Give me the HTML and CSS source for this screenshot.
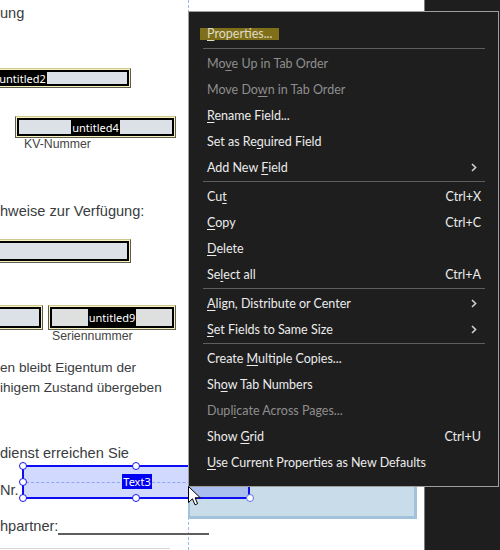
FILE: index.html
```html
<!DOCTYPE html>
<html lang="de">
<head>
<meta charset="utf-8">
<title>Form editor context menu</title>
<link rel="stylesheet" href="styles.css">
</head>
<body>
<div class="screen">
  <div class="page">
    <div class="guide"></div>

    <div class="txt t-ung">ung</div>

    <div class="fld f2"><div class="fin"><span class="lbl">untitled2</span></div></div>

    <div class="fld f4"><div class="fin"><span class="lbl">untitled4</span></div></div>
    <div class="txt cap t-kv">KV-Nummer</div>

    <div class="txt t-hw">hweise zur Verfügung:</div>

    <div class="fld fw"><div class="fin"></div></div>

    <div class="txt cap t-sn">Seriennummer</div>
    <div class="fld fl"><div class="fin"></div></div>
    <div class="fld f9"><div class="fin grey"><span class="lbl">untitled9</span></div></div>

    <div class="txt para t-p1">en bleibt Eigentum der</div>
    <div class="txt para t-p2">ihigem Zustand übergeben</div>

    <div class="txt t-ds">dienst erreichen Sie</div>
    <div class="txt t-nr">Nr.</div>

    <div class="bluefield"></div>

    <div class="sel">
      <div class="midline"></div>
      <span class="sel-lbl">Text3</span>
      <i class="hd h1"></i><i class="hd h2"></i><i class="hd h3"></i>
      <i class="hd h4"></i><i class="hd h5"></i><i class="hd h6 faint"></i>
    </div>

    <div class="txt t-hp">hpartner:</div>
    <div class="uline"></div>
    <div class="foot"></div>
  </div>
  <div class="gutter"></div>

  <div class="menu">
    <div class="item"><span class="hl"><u>P</u>roperties...</span></div>
    <div class="sep"></div>
    <div class="item dis"><span>Mo<u>v</u>e Up in Tab Order</span></div>
    <div class="item dis"><span>Move Do<u>w</u>n in Tab Order</span></div>
    <div class="item"><span><u>R</u>ename Field...</span></div>
    <div class="item"><span>Set as Re<u>q</u>uired Field</span></div>
    <div class="item"><span>Add New <u>F</u>ield</span><svg class="chev" width="6" height="9" viewBox="0 0 6 9"><path d="M1 1 L4.6 4.5 L1 8" fill="none" stroke="#cfcfcf" stroke-width="1.6"/></svg></div>
    <div class="sep"></div>
    <div class="item"><span>Cu<u>t</u></span><span class="key">Ctrl+X</span></div>
    <div class="item"><span><u>C</u>opy</span><span class="key">Ctrl+C</span></div>
    <div class="item"><span><u>D</u>elete</span></div>
    <div class="item"><span>Se<u>l</u>ect all</span><span class="key">Ctrl+A</span></div>
    <div class="sep"></div>
    <div class="item"><span><u>A</u>lign, Distribute or Center</span><svg class="chev" width="6" height="9" viewBox="0 0 6 9"><path d="M1 1 L4.6 4.5 L1 8" fill="none" stroke="#cfcfcf" stroke-width="1.6"/></svg></div>
    <div class="item"><span><u>S</u>et Fields to Same Size</span><svg class="chev" width="6" height="9" viewBox="0 0 6 9"><path d="M1 1 L4.6 4.5 L1 8" fill="none" stroke="#cfcfcf" stroke-width="1.6"/></svg></div>
    <div class="sep"></div>
    <div class="item"><span>Create <u>M</u>ultiple Copies...</span></div>
    <div class="item"><span>Sh<u>o</u>w Tab Numbers</span></div>
    <div class="item dis"><span>Dupl<u>i</u>cate Across Pages...</span></div>
    <div class="item"><span>Show <u>G</u>rid</span><span class="key">Ctrl+U</span></div>
    <div class="item"><span><u>U</u>se Current Properties as New Defaults</span></div>
  </div>

  <svg class="cursor" width="14" height="21" viewBox="0 0 14 21"><path d="M0.5 0.5 L0.5 16.5 L4.4 12.8 L7 18.8 L9.6 17.7 L7.1 11.8 L12.3 11.8 Z" fill="#fff" stroke="#000" stroke-width="1"/></svg>
</div>
</body>
</html>
```
FILE: styles.css
```css
* { box-sizing: border-box; }
html, body { margin: 0; padding: 0; background: #fff; }
.screen {
  position: relative;
  display: flex;
  width: 500px;
  height: 550px;
  overflow: hidden;
}
.page {
  position: relative;
  width: 425px;
  height: 550px;
  background: #fff;
  border-right: 1px solid #7c7c7c;
  overflow: hidden;
  font-family: "Liberation Sans", Arial, sans-serif;
  color: #3a3c40;
}
.gutter { flex: 1; background: #1e1e1e; }

.guide {
  position: absolute;
  left: 188px; top: 0;
  height: 550px; width: 0;
  border-left: 1px dashed #9fb4ea;
}

.txt { position: absolute; white-space: nowrap; font-size: 14.6px; line-height: 18px; }
.cap { font-size: 12.3px; line-height: 14px; color: #444; }
.para { font-size: 13.6px; line-height: 16px; }
.t-ung { left: 0; top: 4px; }
.t-kv { left: 24px; top: 137px; }
.t-hw { left: 0; top: 202px; }
.t-sn { left: 52px; top: 329px; }
.t-p1 { left: 0; top: 360px; }
.t-p2 { left: 0; top: 380px; }
.t-ds { left: 0; top: 444px; }
.t-nr { left: 0; top: 481px; }
.t-hp { left: 0; top: 517px; }
.uline { position: absolute; left: 58px; top: 533px; width: 151px; height: 2px; background: #5e5e5e; }
.foot { position: absolute; left: 0; top: 548px; width: 170px; height: 1px; background: #d8d8d8; }

/* form fields */
.fld {
  position: absolute;
  display: flex;
  border: 1px solid #5c5c50;
  border-top-color: #cfc990;
  background: #f6f1bd;
  padding: 1px;
}
.fin {
  flex: 1;
  display: flex;
  justify-content: center;
  border: 2px solid #000;
  background: #dce1e8;
}
.fin.grey { background: #dde0de; }
.lbl {
  display: flex;
  align-items: center;
  background: #000;
  color: #fff;
  font-family: "Noto Sans", sans-serif;
  font-size: 11px;
  padding: 0 1px;
}
.f2 { left: -86px; top: 68px; width: 217px; height: 20px; }
.f4 { left: 15px; top: 116px; width: 161px; height: 22px; }
.fw { left: -20px; top: 239px; width: 151px; height: 24px; }
.fl { left: -20px; top: 305px; width: 63px; height: 25px; }
.f9 { left: 48px; top: 305px; width: 128px; height: 25px; }

/* light blue field under the menu */
.bluefield {
  position: absolute;
  left: 188px; top: 468px;
  width: 229px; height: 51px;
  background: #c9dce9;
  border: 3px solid #a2c2dc;
  border-left-width: 2px;
}

/* selected field Text3 */
.sel {
  position: absolute;
  left: 22px; top: 465px;
  width: 228px; height: 34px;
  border: 2px solid #0d0df2;
  background: rgba(80, 110, 250, 0.26);
  display: flex;
  align-items: center;
  justify-content: center;
}
.midline {
  position: absolute;
  left: 2px; right: 2px; top: 15px;
  border-top: 1px dashed #90a4f2;
}
.sel-lbl {
  position: relative;
  background: #0000f5;
  color: #fff;
  font-family: "Noto Sans", sans-serif;
  font-size: 11px;
  line-height: 15px;
  padding: 0 1px;
  margin-left: 2px;
  margin-top: -1px;
}
.hd {
  position: absolute;
  width: 8px; height: 8px;
  border-radius: 50%;
  background: #fff;
  border: 1px solid #1515f0;
}
.h1 { left: -5px; top: -5px; }
.h2 { left: 108px; top: -5px; }
.h3 { left: -5px; top: 11px; }
.h4 { left: -5px; top: 27px; }
.h5 { left: 108px; top: 27px; }
.h6 { left: 222px; top: 27px; }
.faint { border-color: #6272e6; }

/* context menu */
.menu {
  position: absolute;
  left: 188px; top: 11px;
  width: 311px; height: 476px;
  background: #1e1e1e;
  border: 1px solid #9e9e9e;
  padding: 9px 0 10px;
  font-family: Lato, "Noto Sans", sans-serif;
  font-size: 12.5px;
  color: #ececec;
  display: flex;
  flex-direction: column;
}
.item {
  height: 26px;
  display: flex;
  align-items: center;
  justify-content: space-between;
  padding: 0 17px 0 18px;
  white-space: nowrap;
}
.item.dis { color: #8e8e8e; }
.item u { text-decoration-thickness: 1px; text-underline-offset: 2px; }
.key { color: #ececec; }
.chev { margin-right: 4px; }
.hl {
  background: #7f6f18;
  color: #dedbc8;
  line-height: 12px;
  padding: 0 6px 0 7px;
  margin-left: -7px;
}
.sep {
  height: 3px;
  margin: 0 13px 0 14px;
  border-top: 1px solid transparent;
  position: relative;
}
.sep::after {
  content: "";
  position: absolute;
  left: 0; right: 0; top: 0;
  height: 1px;
  background: #5e5e5e;
}

.cursor {
  position: absolute;
  left: 188px; top: 486px;
}
```
